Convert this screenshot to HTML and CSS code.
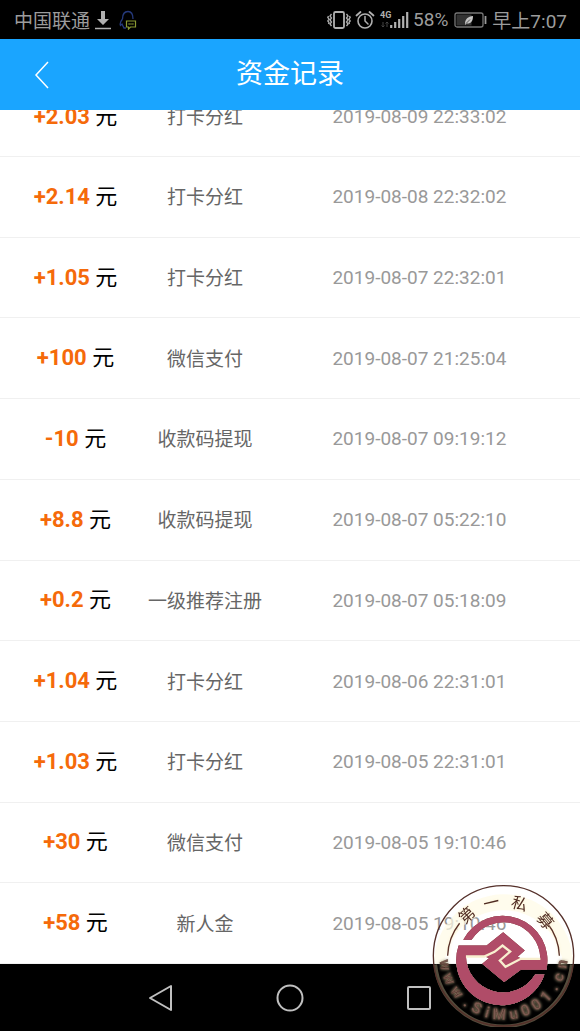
FILE: index.html
```html
<!DOCTYPE html>
<html lang="zh-CN">

<head>
    <meta charset="UTF-8">
    <meta name="viewport" content="width=device-width, initial-scale=1.0">
    <title>资金记录</title>
    <link rel="stylesheet" href="styles.css">
</head>

<body>
    <div class="status-bar">
        <div class="status-left">
            <span>中国联通</span>
            <svg class="icon-download" viewBox="0 0 18 20" width="18" height="20">
                <path d="M7 1h4v8h4l-6 6-6-6h4z" fill="#b0b0b0" />
                <path d="M1 18.500h16" stroke="#b0b0b0" stroke-width="1.500" />
            </svg>
            <svg class="icon-qq" viewBox="0 0 18 20" width="18" height="20" fill="none">
                <path d="M3.500 9C3.500 4 6 1.500 9 1.500S14 4 14 9M3.500 9C1 12 .8 14 1.500 15.500L3 14l2 4h2" stroke="#25397c" stroke-width="1.300" />
                <path d="M7.500 11h9v6h-5l-2 2v-2h-2z" stroke="#8a9a32" stroke-width="1.200" />
                <path d="M9.500 14h5" stroke="#8a9a32" stroke-width="1.500" stroke-dasharray="1.200 .7" />
            </svg>
        </div>
        <div class="status-right">
            <svg viewBox="0 0 24 20" width="24" height="20" fill="none" stroke="#b0b0b0">
                <rect x="7" y="2" width="10" height="16" rx="1.500" stroke-width="1.800" />
                <path d="M4.500 4l-1.500 2 1.500 2-1.500 2 1.500 2-1.500 2 1.500 2M1.500 6L.8 7.500 2 9 .8 11 2 12.500 1.500 14M19.500 4l1.500 2-1.500 2 1.500 2-1.500 2 1.500 2-1.500 2M22.500 6l.7 1.500L22 9l1.200 2-1.200 1.500.5 1.500" stroke-width="1.300" />
            </svg>
            <svg viewBox="0 0 20 20" width="20" height="20" fill="none" stroke="#b0b0b0" stroke-linecap="round">
                <circle cx="10" cy="11" r="7" stroke-width="1.600" />
                <path d="M10 6.500V11l3 3" stroke-width="1.500" />
                <path d="M1.500 5.500l4-3.500M18.500 5.500l-4-3.500" stroke-width="1.800" />
            </svg>
            <svg class="icon-signal" viewBox="0 0 30 20" width="30" height="20">
                <text class="network" x="1" y="8">4G</text>
                <path d="M4 12v5M2.500 15.500L4 17l1.500-1.500M8 17v-5M6.500 13.500L8 12l1.500 1.500" fill="none" stroke="#444" />
                <path d="M12.200 18v-3M16.200 18v-6M20.200 18v-9M24.200 18V6M28.200 18V2" stroke="#b0b0b0" stroke-width="2.200" />
            </svg>
            <span>58%</span>
            <svg class="icon-battery" viewBox="0 0 34 20" width="34" height="20">
                <rect x="1" y="3" width="28" height="14" rx="2" fill="none" stroke="#777" stroke-width="1.300" />
                <rect x="2.500" y="4.500" width="15" height="11" fill="#333" />
                <path d="M11 14c0-5 3-7.500 8-8 0 5-2 8-6.500 7.500L11 15z" fill="#c4c4c4" />
                <path d="M12 13.500l4-4" stroke="#333" stroke-width=".8" />
                <path d="M31.500 6v8" stroke="#999" stroke-width="1.800" />
            </svg>
            <span>早上7:07</span>
        </div>
    </div>

    <header class="header">
        <button class="back" aria-label="返回">
            <svg viewBox="0 0 16 28" width="16" height="28">
                <path d="M14 1L2 14l12 13" fill="none" stroke="#fff" stroke-width="1.500" />
            </svg>
        </button>
        <h1>资金记录</h1>
    </header>

    <main class="records">
        <table>
            <tbody>
                <tr>
                    <td class="amount"><b>+2.03</b> 元</td>
                    <td class="type">打卡分红</td>
                    <td class="time">2019-08-09 22:33:02</td>
                </tr>
                <tr>
                    <td class="amount"><b>+2.14</b> 元</td>
                    <td class="type">打卡分红</td>
                    <td class="time">2019-08-08 22:32:02</td>
                </tr>
                <tr>
                    <td class="amount"><b>+1.05</b> 元</td>
                    <td class="type">打卡分红</td>
                    <td class="time">2019-08-07 22:32:01</td>
                </tr>
                <tr>
                    <td class="amount"><b>+100</b> 元</td>
                    <td class="type">微信支付</td>
                    <td class="time">2019-08-07 21:25:04</td>
                </tr>
                <tr>
                    <td class="amount"><b>-10</b> 元</td>
                    <td class="type">收款码提现</td>
                    <td class="time">2019-08-07 09:19:12</td>
                </tr>
                <tr>
                    <td class="amount"><b>+8.8</b> 元</td>
                    <td class="type">收款码提现</td>
                    <td class="time">2019-08-07 05:22:10</td>
                </tr>
                <tr>
                    <td class="amount"><b>+0.2</b> 元</td>
                    <td class="type">一级推荐注册</td>
                    <td class="time">2019-08-07 05:18:09</td>
                </tr>
                <tr>
                    <td class="amount"><b>+1.04</b> 元</td>
                    <td class="type">打卡分红</td>
                    <td class="time">2019-08-06 22:31:01</td>
                </tr>
                <tr>
                    <td class="amount"><b>+1.03</b> 元</td>
                    <td class="type">打卡分红</td>
                    <td class="time">2019-08-05 22:31:01</td>
                </tr>
                <tr>
                    <td class="amount"><b>+30</b> 元</td>
                    <td class="type">微信支付</td>
                    <td class="time">2019-08-05 19:10:46</td>
                </tr>
                <tr>
                    <td class="amount"><b>+58</b> 元</td>
                    <td class="type">新人金</td>
                    <td class="time">2019-08-05 19:10:46</td>
                </tr>
            </tbody>
        </table>
    </main>

    <nav class="nav-bar">
        <button aria-label="返回">
            <svg viewBox="0 0 28 28" width="28" height="28">
                <path d="M24 2v24L3 14z" />
            </svg>
        </button>
        <button aria-label="主页">
            <svg viewBox="0 0 28 28" width="28" height="28">
                <circle cx="14" cy="14" r="12.500" />
            </svg>
        </button>
        <button aria-label="最近任务">
            <svg viewBox="0 0 28 28" width="28" height="28">
                <rect x="3" y="3" width="22" height="22" rx="1" />
            </svg>
        </button>
    </nav>

    <!-- round site seal -->
    <svg class="seal" viewBox="36 40 430 430" width="143" height="143">
        <path d="M42 280A209 209 0 0 1 460 280H430A180 180 0 0 0 72 280z" fill="#fffbe6" fill-opacity=".7" />
        <path d="M46 282A206 206 0 0 0 456 282" fill="none" stroke="#8a7d62" stroke-opacity=".6" stroke-width="11" />
        <circle cx="251" cy="256" r="211" fill="none" stroke="#55302a" stroke-width="4" />
        <g class="seal-glow" fill="none" stroke="#5a3128" stroke-width="4">
            <path d="M83 256A168 168 0 0 1 119 158" />
            <path d="M419 256A168 168 0 0 0 383 158" />
        </g>
        <g class="seal-top">
            <text transform="translate(251 256) rotate(-42) translate(0 -147)">第</text>
            <text transform="translate(251 256) rotate(-13) translate(0 -147)">一</text>
            <text transform="translate(251 256) rotate(17) translate(0 -147)">私</text>
            <text transform="translate(251 256) rotate(50) translate(0 -147)">募</text>
        </g>
        <g class="seal-url">
            <text transform="translate(251 256) rotate(81) translate(0 192)">w</text>
            <text transform="translate(251 256) rotate(67) translate(0 192)">w</text>
            <text transform="translate(251 256) rotate(52) translate(0 192)">w</text>
            <text transform="translate(251 256) rotate(38) translate(0 192)">.</text>
            <text transform="translate(251 256) rotate(27) translate(0 192)">S</text>
            <text transform="translate(251 256) rotate(16) translate(0 192)">i</text>
            <text transform="translate(251 256) rotate(4) translate(0 192)">M</text>
            <text transform="translate(251 256) rotate(-10) translate(0 192)">u</text>
            <text transform="translate(251 256) rotate(-22) translate(0 192)">0</text>
            <text transform="translate(251 256) rotate(-34) translate(0 192)">0</text>
            <text transform="translate(251 256) rotate(-46) translate(0 192)">1</text>
            <text transform="translate(251 256) rotate(-58) translate(0 192)">.</text>
            <text transform="translate(251 256) rotate(-69) translate(0 192)">c</text>
            <text transform="translate(251 256) rotate(-82) translate(0 192)">n</text>
        </g>
        <g class="seal-mark">
            <path d="M130 208A134 134 0 0 1 380 298H303L253 335 187 280 240 236 305 264H362A112 112 0 0 0 155 208z" />
            <path d="M116 225H200L250 185 315 240 264 284 193 257H138A112 112 0 0 0 346 312H374A134 134 0 0 1 116 225z" />
        </g>
        <path class="seal-cut" d="M138 258H193L224 244 248 225 271 243 240 270 257 289 303 265H362" />
    </svg>
</body>

</html>
```

FILE: styles.css
```css
:root {
    --blue: #1aa5ff;
    --orange: #f56a0a;
    --line: #f0f0f0;
    --icon: #b0b0b0;
}

* {
    box-sizing: border-box;
}

body {
    margin: 0;
    height: 100vh;
    display: flex;
    flex-direction: column;
    background: #fff;
    font-family: Roboto, "Noto Sans CJK SC", sans-serif;
    overflow: hidden;
}

button {
    padding: 0;
    border: none;
    background: none;
    cursor: pointer;
}

svg {
    display: block;
}

.status-bar {
    flex: none;
    height: 39px;
    padding: 0 13px 0 14px;
    display: flex;
    align-items: center;
    justify-content: space-between;
    background: #000;
    color: #9c9c9c;
    font-size: 19px;
    white-space: nowrap;
}

.status-left,
.status-right {
    display: flex;
    align-items: center;
    gap: 4px;
}

.icon-qq {
    margin-left: 3px;
}

.icon-battery {
    margin-left: 2px;
}

.network {
    fill: var(--icon);
    font-size: 9px;
    font-weight: bold;
}

.header {
    flex: none;
    height: 71px;
    padding: 0 34px;
    display: grid;
    grid-template-columns: 16px 1fr 16px;
    align-items: center;
    background: var(--blue);
    color: #fff;
}

.header h1 {
    margin: 0;
    padding-bottom: 2px;
    font-size: 27px;
    font-weight: normal;
    line-height: 40px;
    text-align: center;
}

/* list is scrolled to the last record */
.records {
    flex: 1;
    min-height: 0;
    display: flex;
    align-items: flex-end;
    overflow: hidden;
}

.records table {
    width: 100%;
    height: 887px;
    table-layout: fixed;
    border-collapse: collapse;
}

.records td {
    padding: 0;
    border-bottom: 1px solid var(--line);
    text-align: center;
    white-space: nowrap;
}

.records .amount {
    width: 25%;
    padding: 0 0 6px 6px;
    color: #000;
    font-size: 22px;
}

.amount b {
    color: var(--orange);
}

.records .type {
    width: 21%;
    padding: 0 2px 2px 0;
    color: #666;
    font-size: 19px;
}

.records .time {
    padding-right: 8px;
    color: #999;
    font-size: 19px;
}

.nav-bar {
    flex: none;
    height: 67px;
    padding: 0 96px;
    display: flex;
    align-items: center;
    justify-content: space-around;
    background: #000;
}

.nav-bar svg {
    fill: none;
    stroke: #c0c0c0;
    stroke-width: 2;
    stroke-linejoin: round;
}

.seal {
    position: fixed;
    right: 5px;
    bottom: 4px;
}

.seal text {
    text-anchor: middle;
}

.seal-glow,
.seal-top {
    filter: drop-shadow(0 0 4px #fff3cf);
}

.seal-top {
    fill: #4e2a22;
    font-size: 48px;
}

.seal-url {
    fill: #7b5a50;
    stroke: #4a3028;
    stroke-width: 1;
    font-size: 46px;
    font-weight: bold;
    filter: drop-shadow(0 0 4px #a89a78);
}

.seal-mark {
    fill: #b04c68;
    filter: drop-shadow(0 0 2px #6b2a3c) drop-shadow(0 0 2px #f8efcf);
}

.seal-cut {
    fill: none;
    stroke: #f8efcf;
    stroke-width: 7;
}
```
